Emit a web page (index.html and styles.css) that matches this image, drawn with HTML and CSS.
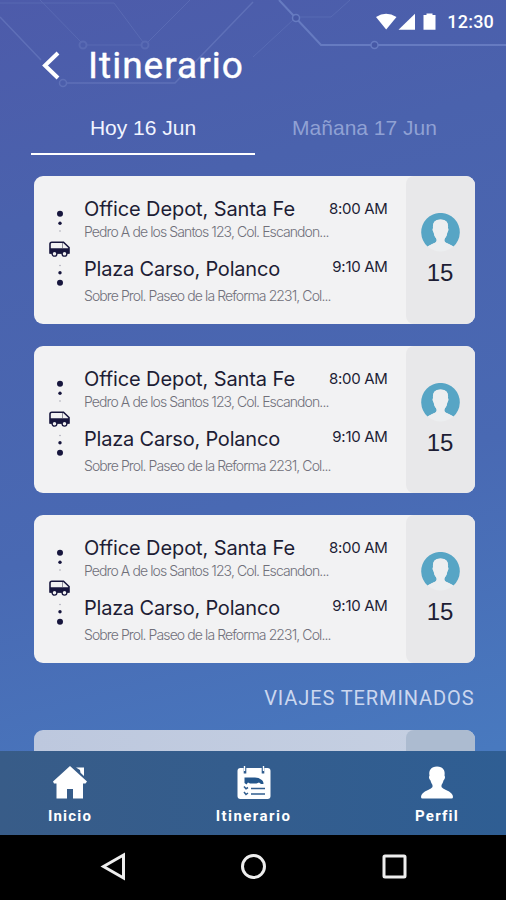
FILE: index.html
```html
<!DOCTYPE html>
<html lang="es">
<head>
    <meta charset="UTF-8">
    <meta name="viewport" content="width=device-width, initial-scale=1.0">
    <title>Itinerario</title>
    <link rel="stylesheet" href="styles.css">
</head>
<body>
    <svg class="icon-defs" width="0" height="0">
        <symbol id="van" viewBox="0 0 21 16">
            <path d="M1 12V3Q1 1.200 2.800 1.200H14.500L20 6.500V12Z" fill="#f2f2f3" stroke="#17163d" stroke-width="1.600"/>
            <path d="M1 7.200H20V12.500H1Z" fill="#17163d"/>
            <path d="M13.500 2V7" stroke="#8f8f9c" stroke-width="1"/>
            <circle cx="5.500" cy="12.800" r="2.400" fill="#f2f2f3" stroke="#17163d" stroke-width="1.300"/>
            <circle cx="15.500" cy="12.800" r="2.400" fill="#f2f2f3" stroke="#17163d" stroke-width="1.300"/>
        </symbol>
        <symbol id="avatar" viewBox="0 0 39 39">
            <path d="M6.500 33.500A19.300 19.300 0 1 1 32.500 33.500Q28 31 24.500 29.500Q22.800 28.300 23.500 26Q26 23 26.500 19Q28 17.500 27 15Q28 6.500 19.500 6.500Q11 6.500 12 15Q11 17.500 12.500 19Q13 23 15.500 26Q16.200 28.300 14.500 29.500Q11 31 6.500 33.500Z" fill="#57a5c5"/>
            <path d="M19.500 6.500Q28 6.500 27 15Q28 17.500 26.500 19Q26 23 23.500 26Q22.800 28.300 24.500 29.500Q28 31 32.500 33.500Q26 38.500 19.500 38.500Q13 38.500 6.500 33.500Q11 31 14.500 29.500Q16.200 28.300 15.500 26Q13 23 12.500 19Q11 17.500 12 15Q11 6.500 19.500 6.500Z" fill="#eceef0"/>
        </symbol>
    </svg>

    <div class="screen">
        <svg class="circuit" width="506" height="100" viewBox="0 0 506 100" fill="none">
            <g stroke="#7183c5" stroke-width="1.500" opacity=".5">
                <path d="M0 17L41 60M66 83H175L253 2"/>
                <circle cx="63" cy="83" r="3.500"/>
            </g>
            <g stroke="#7183c5" stroke-width="1" opacity=".35">
                <path d="M0 3H114L143 42M40 0L81 42M190 0L148 42M86 45H141M253 57L293 20M300 17H331L350 0"/>
                <circle cx="83" cy="45" r="3.500" stroke-width="2"/>
                <circle cx="145" cy="45" r="3.500" stroke-width="2"/>
            </g>
            <path d="M279 0L321 45H506" stroke="#667bc1" stroke-width="2"/>
            <g fill="#4658a5" stroke="#667bc1" stroke-width="1.500">
                <circle cx="296" cy="18" r="3.500"/>
                <circle cx="374.500" cy="45" r="3.500"/>
            </g>
        </svg>

        <div class="status-bar">
            <svg width="62" height="18" viewBox="0 0 62 18" fill="#fff">
                <path d="M0 4Q10 -2.500 20.500 4L10.200 16.500Z"/>
                <path d="M22.500 16.800L39 0.800V16.800Z"/>
                <path d="M47.500 2H50.500V0.500H56.500V2H59.500V16.800H47.500Z"/>
            </svg>
            <span class="clock">12:30</span>
        </div>

        <div class="header">
            <svg width="20" height="30" viewBox="0 0 20 30" fill="none" stroke="#fff" stroke-width="4">
                <path d="M18 2L5 14.500L18 27"/>
            </svg>
            <h1>Itinerario</h1>
        </div>

        <div class="tabs">
            <div class="tab active">Hoy 16 Jun</div>
            <div class="tab">Mañana 17 Jun</div>
        </div>

        <div class="trips">
            <div class="trip">
                <div class="route">
                    <svg class="dots" width="8" height="24" viewBox="0 0 8 24"><circle cx="4" cy="4.700" r="3"/><circle cx="4" cy="14.300" r="1.700"/><circle cx="4" cy="22" r=".7" opacity=".4"/></svg>
                    <svg class="van" width="21" height="16"><use href="#van"/></svg>
                    <svg class="dots" width="8" height="24" viewBox="0 0 8 24"><circle cx="4" cy="2.500" r=".7" opacity=".4"/><circle cx="4" cy="9.700" r="1.700"/><circle cx="4" cy="19.700" r="3"/></svg>
                </div>
                <div class="stops">
                    <div class="stop"><span class="place from">Office Depot, Santa Fe</span><span class="time">8:00 AM</span></div>
                    <div class="address">Pedro A de los Santos 123, Col. Escandon...</div>
                    <div class="stop second"><span class="place to">Plaza Carso, Polanco</span><span class="time late">9:10 AM</span></div>
                    <div class="address last">Sobre Prol. Paseo de la Reforma 2231, Col...</div>
                </div>
                <div class="seats">
                    <svg width="39" height="39"><use href="#avatar"/></svg>
                    <span>15</span>
                </div>
            </div>

            <div class="trip">
                <div class="route">
                    <svg class="dots" width="8" height="24" viewBox="0 0 8 24"><circle cx="4" cy="4.700" r="3"/><circle cx="4" cy="14.300" r="1.700"/><circle cx="4" cy="22" r=".7" opacity=".4"/></svg>
                    <svg class="van" width="21" height="16"><use href="#van"/></svg>
                    <svg class="dots" width="8" height="24" viewBox="0 0 8 24"><circle cx="4" cy="2.500" r=".7" opacity=".4"/><circle cx="4" cy="9.700" r="1.700"/><circle cx="4" cy="19.700" r="3"/></svg>
                </div>
                <div class="stops">
                    <div class="stop"><span class="place from">Office Depot, Santa Fe</span><span class="time">8:00 AM</span></div>
                    <div class="address">Pedro A de los Santos 123, Col. Escandon...</div>
                    <div class="stop second"><span class="place to">Plaza Carso, Polanco</span><span class="time late">9:10 AM</span></div>
                    <div class="address last">Sobre Prol. Paseo de la Reforma 2231, Col...</div>
                </div>
                <div class="seats">
                    <svg width="39" height="39"><use href="#avatar"/></svg>
                    <span>15</span>
                </div>
            </div>

            <div class="trip">
                <div class="route">
                    <svg class="dots" width="8" height="24" viewBox="0 0 8 24"><circle cx="4" cy="4.700" r="3"/><circle cx="4" cy="14.300" r="1.700"/><circle cx="4" cy="22" r=".7" opacity=".4"/></svg>
                    <svg class="van" width="21" height="16"><use href="#van"/></svg>
                    <svg class="dots" width="8" height="24" viewBox="0 0 8 24"><circle cx="4" cy="2.500" r=".7" opacity=".4"/><circle cx="4" cy="9.700" r="1.700"/><circle cx="4" cy="19.700" r="3"/></svg>
                </div>
                <div class="stops">
                    <div class="stop"><span class="place from">Office Depot, Santa Fe</span><span class="time">8:00 AM</span></div>
                    <div class="address">Pedro A de los Santos 123, Col. Escandon...</div>
                    <div class="stop second"><span class="place to">Plaza Carso, Polanco</span><span class="time late">9:10 AM</span></div>
                    <div class="address last">Sobre Prol. Paseo de la Reforma 2231, Col...</div>
                </div>
                <div class="seats">
                    <svg width="39" height="39"><use href="#avatar"/></svg>
                    <span>15</span>
                </div>
            </div>

            <h2>VIAJES TERMINADOS</h2>
            <div class="trip finished">
                <div class="seats"></div>
            </div>
        </div>

        <div class="nav">
            <div class="nav-item">
                <svg width="36" height="36" viewBox="0 0 36 36" fill="#fff">
                    <path d="M18 1L35 16.500L33.500 18.500H31V33.500H21V24H15V33.500H4.500V18.500H2L1 16.500Z"/>
                    <path d="M24 2.500H32V11L28.500 7.800L28 5Z"/>
                </svg>
                <span>Inicio</span>
            </div>
            <div class="nav-item">
                <svg width="36" height="36" viewBox="0 0 36 36">
                    <rect x="1.500" y="3" width="33" height="31" rx="3" fill="#fff"/>
                    <path d="M9 1.500V8.500M27 1.500V8.500" stroke="#315d8e" stroke-width="2.600"/>
                    <path d="M8.500 1V6M27.500 1V6" stroke="#fff" stroke-width="1.400"/>
                    <path d="M8.500 12.500H19Q23 12.500 25 14.500Q27.500 15.500 27.500 19H25L23 17.500L20.500 18.500H14L12 17.500L10.500 19.500L8.500 18Z" fill="#24568b"/>
                    <path d="M8 21.500L10 23.800L12 22.500M8 27L10 29.500L12 28" fill="none" stroke="#315d8e" stroke-width="1.500"/>
                    <path d="M15 23.500H29M15 29H29" stroke="#315d8e" stroke-width="1.500"/>
                </svg>
                <span class="wide">Itinerario</span>
            </div>
            <div class="nav-item">
                <svg width="36" height="36" viewBox="0 0 36 36" fill="#fff">
                    <path d="M18 1.500C24 1.500 26.500 5.500 25.500 10.500C26.500 12 26 14 24.500 15.500C24 17.500 23 19 22.500 20V22Q23.500 23.500 27 25Q34 28 34 32Q34 33.500 32.500 33.500H3.500Q2 33.500 2 32Q2 28 9 25Q12.500 23.500 13.500 22V20C13 19 12 17.500 11.500 15.500C10 14 9.500 12 10.500 10.500C9.500 5.500 12 1.500 18 1.500Z"/>
                </svg>
                <span>Perfil</span>
            </div>
        </div>

        <div class="system-bar">
            <svg width="28" height="30" viewBox="0 0 28 30"><path d="M23.500 4V27L3.500 15.500Z"/></svg>
            <svg width="28" height="30" viewBox="0 0 28 30"><circle cx="13.500" cy="15.500" r="11"/></svg>
            <svg width="28" height="30" viewBox="0 0 28 30"><rect x="4" y="5" width="21" height="21" rx="1"/></svg>
        </div>
    </div>
</body>
</html>
```
FILE: styles.css
```css
* {
    box-sizing: border-box;
}
body {
    margin: 0;
    font-family: Inter, Roboto, sans-serif;
}
svg {
    display: block;
    flex: none;
}
.icon-defs {
    position: absolute;
}
.screen {
    position: relative;
    width: 506px;
    height: 900px;
    display: flex;
    flex-direction: column;
    overflow: hidden;
    color: #fff;
    background: linear-gradient(165deg, #4d5baa 0%, #4a62ad 22%, #4969b3 55%, #4879bf 85%);
}
.circuit {
    position: absolute;
    top: 0;
    left: 0;
}
.status-bar {
    position: relative;
    height: 44px;
    padding: 0 12px 0 0;
    display: flex;
    align-items: center;
    justify-content: flex-end;
    gap: 9px;
}
.clock {
    font: 500 18px/20px Roboto, sans-serif;
    letter-spacing: 0.2px;
}
.header {
    position: relative;
    height: 44px;
    padding-left: 40px;
    display: flex;
    align-items: center;
    gap: 28px;
}
.header h1 {
    margin: 0;
    font: 400 37px/44px Roboto, sans-serif;
    letter-spacing: 1px;
    -webkit-text-stroke: 0.4px #fff;
}
.tabs {
    height: 67px;
    margin: 0 27px 0 31px;
    display: flex;
}
.tab {
    flex: none;
    width: 224px;
    padding-top: 26px;
    text-align: center;
    font: 21px/28px "Liberation Sans", Arial, sans-serif;
    letter-spacing: 0;
    color: #90a1d4;
}
.tab + .tab {
    padding-right: 5px;
}
.tab.active {
    color: #f1f4ff;
    border-bottom: 2px solid #fff;
}
.trips {
    flex: 1;
    min-height: 0;
    overflow: hidden;
    padding: 21.400px 31.500px 0 33.500px;
}
.trip {
    height: 147.500px;
    margin-bottom: 21.900px;
    display: flex;
    overflow: hidden;
    border-radius: 9px;
    background: #f2f2f3;
    color: #1d1d35;
}
.route {
    width: 50.500px;
    padding: 33px 0 0 15.500px;
}
.dots {
    margin-left: 7px;
    fill: #17163d;
}
.van {
    margin: 8px 0 6px;
}
.stops {
    width: 322px;
    padding: 20px 18px 0 0;
    white-space: nowrap;
}
.stop {
    height: 26px;
    display: flex;
    justify-content: space-between;
    align-items: center;
}
.place {
    font-size: 20px;
    line-height: 26px;
    letter-spacing: -0.1px;
}
.place.to {
    letter-spacing: -0.2px;
}
.time {
    font-size: 15px;
    line-height: 20px;
    letter-spacing: -0.3px;
}
.time.late {
    margin-bottom: 4px;
}
.second {
    margin-top: 15px;
}
.address {
    height: 19px;
    font-size: 14px;
    font-weight: 300;
    line-height: 19px;
    letter-spacing: -0.900px;
    color: #70707a;
}
.address.last {
    margin-top: 4px;
}
.seats {
    width: 69px;
    padding-top: 37px;
    display: flex;
    flex-direction: column;
    align-items: center;
    border-radius: 8px 0 0 8px;
    background: #e8e8ea;
    font: 24px/30px "Liberation Sans", Arial, sans-serif;
}
.seats span {
    margin-top: 6px;
}
h2 {
    margin: 1px 0 19px;
    text-align: right;
    font: 400 20px/26px Roboto, sans-serif;
    letter-spacing: 0.900px;
    color: #cbd7ef;
}
.finished {
    justify-content: flex-end;
    background: linear-gradient(90deg, #bdc8de, #c6d0e2);
}
.finished .seats {
    background: #acbbd0;
}
.nav {
    height: 84px;
    padding: 14px 20px 0 21px;
    display: flex;
    justify-content: space-between;
    background: linear-gradient(90deg, #385c88, #2f5e93);
}
.nav-item {
    width: 98px;
    display: flex;
    flex-direction: column;
    align-items: center;
    gap: 5px;
    font: 700 15px/20px Roboto, sans-serif;
    letter-spacing: 1.200px;
}
.wide {
    letter-spacing: 1.450px;
}
.system-bar {
    height: 65px;
    padding: 16px 98px 0 100px;
    display: flex;
    justify-content: space-between;
    background: #000;
    fill: none;
    stroke: #eee;
    stroke-width: 3;
}
```
